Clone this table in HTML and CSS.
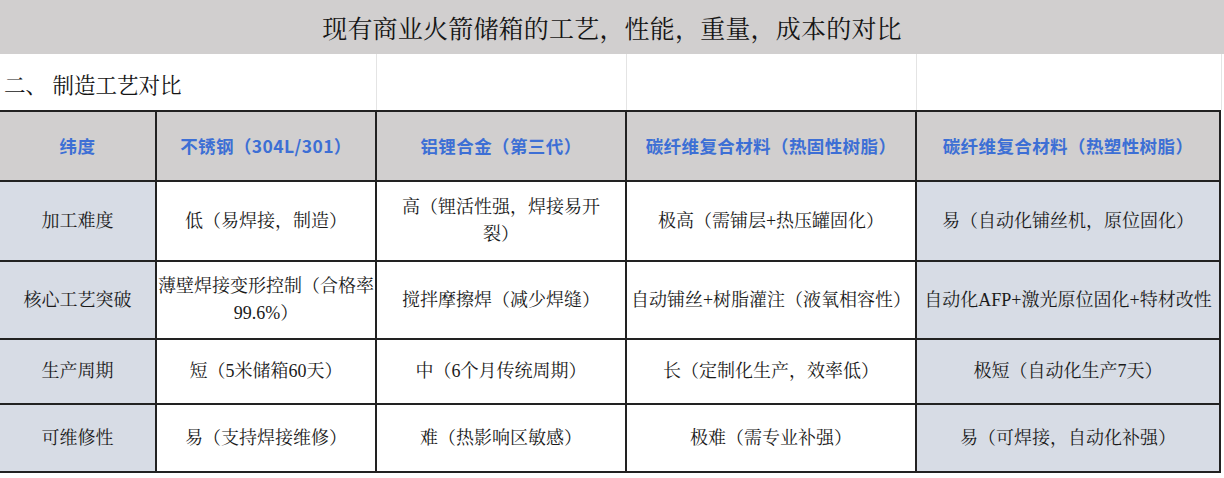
FILE: index.html
```html
<!DOCTYPE html>
<html lang="zh-CN">
<head>
<meta charset="utf-8">
<title>现有商业火箭储箱的工艺，性能，重量，成本的对比</title>
<link rel="stylesheet" href="styles.css">
</head>
<body>
<div class="sheet">
  <div class="title">现有商业火箭储箱的工艺，性能，重量，成本的对比</div>
  <div class="section">
    <div class="sec-cell sec-first">二、 制造工艺对比</div>
    <div class="sec-cell"></div>
    <div class="sec-cell"></div>
    <div class="sec-cell"></div>
  </div>
  <div class="grid">
    <div class="cell head">纬度</div>
    <div class="cell head">不锈钢（304L/301）</div>
    <div class="cell head">铝锂合金（第三代）</div>
    <div class="cell head">碳纤维复合材料（热固性树脂）</div>
    <div class="cell head">碳纤维复合材料（热塑性树脂）</div>

    <div class="cell label">加工难度</div>
    <div class="cell">低（易焊接，制造）</div>
    <div class="cell">高（锂活性强，焊接易开<br>裂）</div>
    <div class="cell">极高（需铺层+热压罐固化）</div>
    <div class="cell shade">易（自动化铺丝机，原位固化）</div>

    <div class="cell label">核心工艺突破</div>
    <div class="cell">薄壁焊接变形控制（合格率<br>99.6%）</div>
    <div class="cell">搅拌摩擦焊（减少焊缝）</div>
    <div class="cell">自动铺丝+树脂灌注（液氧相容性）</div>
    <div class="cell shade">自动化AFP+激光原位固化+特材改性</div>

    <div class="cell label">生产周期</div>
    <div class="cell">短（5米储箱60天）</div>
    <div class="cell">中（6个月传统周期）</div>
    <div class="cell">长（定制化生产，效率低）</div>
    <div class="cell shade">极短（自动化生产7天）</div>

    <div class="cell label">可维修性</div>
    <div class="cell">易（支持焊接维修）</div>
    <div class="cell">难（热影响区敏感）</div>
    <div class="cell">极难（需专业补强）</div>
    <div class="cell shade">易（可焊接，自动化补强）</div>
  </div>
</div>
</body>
</html>
```

FILE: styles.css
```css
html, body {
  margin: 0;
  padding: 0;
  background: #ffffff;
}

body {
  width: 1224px;
  height: 478px;
  overflow: hidden;
  font-family: "Liberation Serif", "Noto Serif CJK SC", "AR PL UMing CN", "Noto Sans CJK SC", serif;
  color: #1a1a1a;
  text-spacing-trim: space-all;
}

.sheet {
  display: flex;
  flex-direction: column;
}

.title {
  height: 54px;
  background: #d1cfcf;
  display: flex;
  align-items: center;
  justify-content: center;
  font-size: 25px;
  color: #151515;
  letter-spacing: 0.2px;
}

.section {
  height: 56px;
  display: grid;
  grid-template-columns: 377px 250px 290px 305px;
}

.sec-cell {
  border-right: 1px solid #e4e4e4;
  box-sizing: border-box;
}

.sec-first {
  display: flex;
  align-items: center;
  padding-left: 4px;
  padding-top: 2px;
  font-size: 21.5px;
  color: #151515;
}

.grid {
  display: grid;
  grid-template-columns: 157px 220px 250px 290px 304px;
  grid-template-rows: 72px 80px 78px 65px 68px;
  width: 1221px;
}

.cell {
  box-sizing: border-box;
  border-right: 2px solid #222222;
  border-bottom: 2px solid #222222;
  display: flex;
  align-items: center;
  justify-content: center;
  text-align: center;
  font-size: 18px;
  line-height: 1.5;
  white-space: nowrap;
  background: #ffffff;
}

.head {
  border-top: 2px solid #222222;
  background: #d1cfcf;
  color: #3d6fd5;
  font-family: "Noto Sans CJK SC", "Liberation Sans", sans-serif;
  font-weight: 700;
  font-size: 17.5px;
  letter-spacing: 0.4px;
}

.label,
.shade {
  background: #d7dce5;
}
```
